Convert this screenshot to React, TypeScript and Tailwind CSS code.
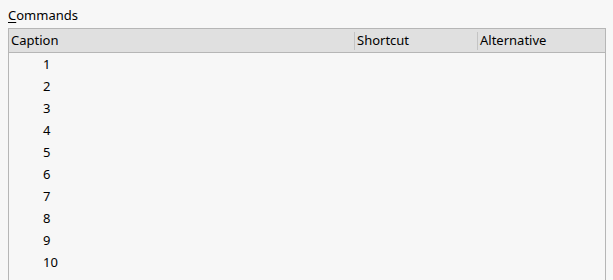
export default function App() {
  const rows = Array.from({ length: 10 }, (_, i) => i + 1);

  return (
    <div
      className="h-[280px] w-[613px] overflow-hidden bg-[#f7f7f7] pt-[6px] text-[13px] text-black"
      style={{ fontFamily: '"Noto Sans", "Open Sans", sans-serif' }}
    >
      <div className="pl-[8px] leading-[18px]">
        <span className="underline underline-offset-2">C</span>ommands
      </div>

      <div className="ml-[8px] mt-[4px] h-[270px] w-[598px] border border-[#b6b6b6] bg-[#f7f7f7]">
        <div className="flex h-[24px] items-center border-b border-[#b6b6b6] bg-[#e0e0e0] leading-[23px]">
          <div className="w-[345px] pl-[2px]">Caption</div>
          <div className="h-[18px] w-px bg-[#c4c4c4]" />
          <div className="w-[122px] pl-[2px]">Shortcut</div>
          <div className="h-[18px] w-px bg-[#c4c4c4]" />
          <div className="flex-1 pl-[2px]">Alternative</div>
        </div>

        <div className="flex flex-col">
          {rows.map((n) => (
            <div key={n} className="h-[22px] pl-[34px] leading-[22px]">
              {n}
            </div>
          ))}
        </div>
      </div>
    </div>
  );
}
